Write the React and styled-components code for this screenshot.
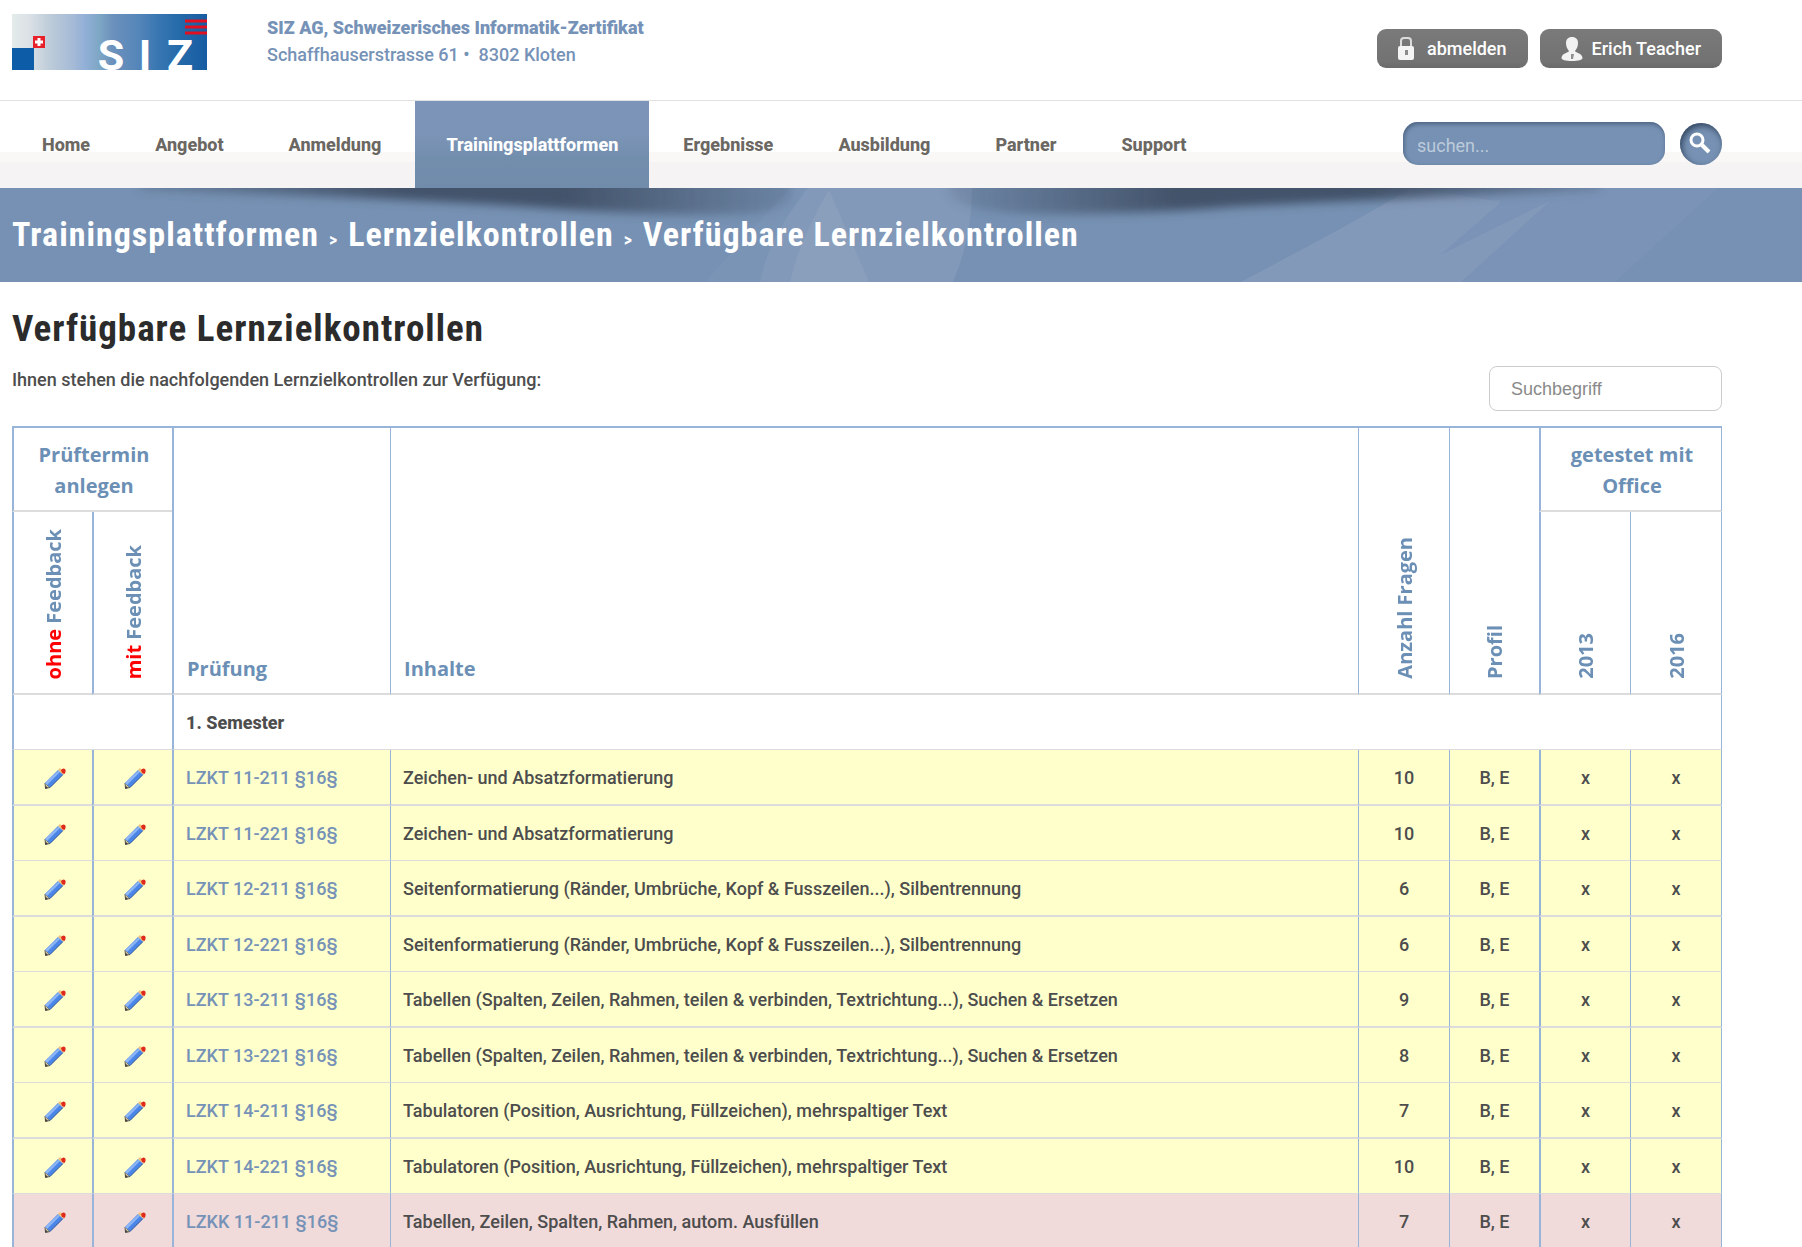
import { useState } from "react";
import styled, { createGlobalStyle } from "styled-components";

const navItems = [
  "Home",
  "Angebot",
  "Anmeldung",
  "Trainingsplattformen",
  "Ergebnisse",
  "Ausbildung",
  "Partner",
  "Support",
];

const exams = [
  { name: "LZKT 11-211 §16§", topic: "Zeichen- und Absatzformatierung", count: 10, type: "text" },
  { name: "LZKT 11-221 §16§", topic: "Zeichen- und Absatzformatierung", count: 10, type: "text" },
  { name: "LZKT 12-211 §16§", topic: "Seitenformatierung (Ränder, Umbrüche, Kopf & Fusszeilen...), Silbentrennung", count: 6, type: "text" },
  { name: "LZKT 12-221 §16§", topic: "Seitenformatierung (Ränder, Umbrüche, Kopf & Fusszeilen...), Silbentrennung", count: 6, type: "text" },
  { name: "LZKT 13-211 §16§", topic: "Tabellen (Spalten, Zeilen, Rahmen, teilen & verbinden, Textrichtung...), Suchen & Ersetzen", count: 9, type: "text" },
  { name: "LZKT 13-221 §16§", topic: "Tabellen (Spalten, Zeilen, Rahmen, teilen & verbinden, Textrichtung...), Suchen & Ersetzen", count: 8, type: "text" },
  { name: "LZKT 14-211 §16§", topic: "Tabulatoren (Position, Ausrichtung, Füllzeichen), mehrspaltiger Text", count: 7, type: "text" },
  { name: "LZKT 14-221 §16§", topic: "Tabulatoren (Position, Ausrichtung, Füllzeichen), mehrspaltiger Text", count: 10, type: "text" },
  { name: "LZKK 11-211 §16§", topic: "Tabellen, Zeilen, Spalten, Rahmen, autom. Ausfüllen", count: 7, type: "calc" },
];

function Logo() {
  return (
    <LogoImage width="195" height="56" viewBox="0 0 195 56" role="img" aria-label="SIZ">
      <defs>
        <linearGradient id="logoFade" x1="0" x2="1">
          <stop offset="0" stopColor="#e3ebeb" />
          <stop offset="0.08" stopColor="#dde2e6" />
          <stop offset="0.2" stopColor="#bccbd9" />
          <stop offset="0.32" stopColor="#a3b9d6" />
          <stop offset="0.37" stopColor="#93b0d8" />
          <stop offset="0.45" stopColor="#7da6c4" />
          <stop offset="0.52" stopColor="#6b90bc" />
          <stop offset="0.65" stopColor="#5586b9" />
          <stop offset="0.75" stopColor="#3876b2" />
          <stop offset="0.87" stopColor="#2369a9" />
          <stop offset="1" stopColor="#175ca2" />
        </linearGradient>
      </defs>
      <rect width="195" height="56" fill="url(#logoFade)" />
      <rect x="0" y="34" width="22" height="22" fill="#0d5ca8" />
      <rect x="21" y="22" width="12" height="12" fill="#e8202a" />
      <path d="M27 24v8M23 28h8" stroke="#fff" strokeWidth="3" />
      <path d="M173 7h22M173 13h22M173 19h22" stroke="#e01020" strokeWidth="3" />
      <text
        y="56"
        fill="#fff"
        fontFamily="Roboto, sans-serif"
        fontWeight="700"
        fontSize="43"
        textAnchor="middle"
      >
        <tspan x="99">S</tspan>
        <tspan x="133">I</tspan>
        <tspan x="168">Z</tspan>
      </text>
    </LogoImage>
  );
}

function LockIcon() {
  return (
    <svg width="16" height="24" viewBox="0 0 16 24" aria-hidden="true">
      <path d="M3 11V4q0-3 3-3h4q3 0 3 3v7" fill="none" stroke="#dcdcdc" strokeWidth="2" />
      <rect x="0" y="9" width="16" height="14" rx="2" fill="#f4f4f4" />
      <path d="M7 13h3v5H7z" fill="#8b8b8b" />
    </svg>
  );
}

function UserIcon() {
  return (
    <svg width="22" height="24" viewBox="0 0 22 24" aria-hidden="true">
      <path
        d="M11 0c4 0 6 2.500 6 6 0 4-1.500 6-3 8 1 2 7 2 7.500 7 0 2-4 3-10.500 3S.5 23 .5 21C1 16 7 16 8 14 6.500 12 5 10 5 6c0-3.500 2-6 6-6z"
        fill="#f2f2f2"
      />
      <path d="M10 17h3l-1 5h-2z" fill="#8f8f8f" />
    </svg>
  );
}

function MagnifierIcon() {
  return (
    <svg width="22" height="22" viewBox="0 0 22 22" aria-hidden="true">
      <circle cx="8" cy="8" r="6" fill="none" stroke="#fff" strokeWidth="3" />
      <path d="M13 13l7 7" stroke="#fff" strokeWidth="4" />
    </svg>
  );
}

function PencilIcon() {
  return (
    <svg width="22" height="22" viewBox="0 0 22 22" aria-hidden="true">
      <path d="M1 16L6 20.500L1.500 21.500Z" fill="#d8c9a0" stroke="#5d5a4c" />
      <path d="M14 3L19 7.500L6 20.500L1 16Z" fill="#4a86e8" />
      <path d="M14.500 3.500L16 5L3 18L1 16Z" fill="#8db5f5" />
      <path d="M19 7.500L6 20.500" stroke="#2a4f96" />
      <path d="M14 3L16 1L21 5.500L19 7.500Z" fill="#f0c27a" />
      <path d="M17 3Q19 0.500 21 2Q22.500 4 20.500 7L18 6Z" fill="#e02a1c" />
      <path d="M1 21.500L1.500 18.500L4 21Z" fill="#444" />
    </svg>
  );
}

function BannerArt() {
  return (
    <Artwork viewBox="0 0 1802 94" preserveAspectRatio="none" aria-hidden="true">
      <defs>
        <filter id="soft" x="-10%" y="-100%" width="120%" height="300%">
          <feGaussianBlur stdDeviation="5" />
        </filter>
        <linearGradient id="fadeLeft" x1="0" x2="1">
          <stop offset="0" stopColor="#43536a" stopOpacity="0.3" />
          <stop offset="0.4" stopColor="#43536a" />
          <stop offset="0.65" stopColor="#43536a" />
          <stop offset="1" stopColor="#43536a" stopOpacity="0.2" />
        </linearGradient>
        <linearGradient id="fadeRight" x1="0" x2="1">
          <stop offset="0" stopColor="#43536a" stopOpacity="0.15" />
          <stop offset="0.35" stopColor="#43536a" />
          <stop offset="0.65" stopColor="#43536a" />
          <stop offset="1" stopColor="#43536a" stopOpacity="0.3" />
        </linearGradient>
      </defs>
      <path d="M705 94L790 0H972Q972 50 953 94Z" fill="#7a94b6" />
      <path d="M760 94Q768 50 808 0H972Q972 50 953 94Z" fill="#8299b9" />
      <path d="M790 94Q800 50 829 2L869 94Z" fill="#8a9fbc" />
      <path d="M1461 94L1590 0H1718L1615 94Z" fill="#7a93b6" />
      <path d="M1350 94L1440 0H1600L1461 94Z" fill="#7a93b6" />
      <path d="M1241 94L1340 41L1412 0L1490 12Q1503 12 1500 15L1440 67L1550 13L1461 94Z" fill="#8399b9" />
      <path d="M140 -10H790Q806 24 740 26Q650 28 560 21Q400 10 140 2Z" fill="url(#fadeLeft)" filter="url(#soft)" />
      <path d="M950 -10H1600V2Q1400 10 1230 19Q1150 26 1050 26Q930 26 950 -10Z" fill="url(#fadeRight)" filter="url(#soft)" />
    </Artwork>
  );
}

function App() {
  const [search, setSearch] = useState("");
  const [term, setTerm] = useState("");
  const rows = exams.filter((exam) =>
    (exam.name + exam.topic).toLowerCase().includes(term.toLowerCase())
  );

  return (
    <>
      <GlobalStyle />
      <Header>
        <Logo />
        <Address>
          <Company>SIZ AG, Schweizerisches Informatik-Zertifikat</Company>
          <span>Schaffhauserstrasse 61 •&nbsp; 8302 Kloten</span>
        </Address>
        <UserButtons>
          <GreyButton type="button" $gap={13}>
            <LockIcon />
            abmelden
          </GreyButton>
          <GreyButton type="button" $gap={9}>
            <UserIcon />
            Erich Teacher
          </GreyButton>
        </UserButtons>
      </Header>

      <NavBar>
        <NavList>
          {navItems.map((item) => (
            <NavLink key={item} href="#" $active={item === "Trainingsplattformen"}>
              {item}
            </NavLink>
          ))}
        </NavList>
        <SearchForm onSubmit={(event) => event.preventDefault()}>
          <SearchInput
            aria-label="suchen"
            placeholder="suchen..."
            value={search}
            onChange={(event) => setSearch(event.target.value)}
          />
          <SearchButton type="submit" aria-label="suchen">
            <MagnifierIcon />
          </SearchButton>
        </SearchForm>
      </NavBar>

      <Banner>
        <BannerArt />
        <Breadcrumb>
          <a href="#">Trainingsplattformen</a>
          <Separator>&gt;</Separator>
          <a href="#">Lernzielkontrollen</a>
          <Separator>&gt;</Separator>
          <span>Verfügbare Lernzielkontrollen</span>
        </Breadcrumb>
      </Banner>

      <Main>
        <Title>Verfügbare Lernzielkontrollen</Title>
        <IntroRow>
          <Intro>Ihnen stehen die nachfolgenden Lernzielkontrollen zur Verfügung:</Intro>
          <TermInput
            aria-label="Suchbegriff"
            placeholder="Suchbegriff"
            value={term}
            onChange={(event) => setTerm(event.target.value)}
          />
        </IntroRow>

        <ExamTable>
          <colgroup>
            <Col $width={80} />
            <Col $width={80} />
            <Col $width={218} />
            <Col />
            <Col $width={91} />
            <Col $width={90} />
            <Col $width={91} />
            <Col $width={92} />
          </colgroup>
          <thead>
            <tr>
              <GroupHead colSpan={2} $thick>
                Prüftermin anlegen
              </GroupHead>
              <Head rowSpan={2} $thick $top>
                Prüfung
              </Head>
              <Head rowSpan={2} $top>
                Inhalte
              </Head>
              <Head rowSpan={2} $top $center>
                <Vertical>Anzahl Fragen</Vertical>
              </Head>
              <Head rowSpan={2} $top $center>
                <Vertical>Profil</Vertical>
              </Head>
              <GroupHead colSpan={2} $thick>
                getestet mit Office
              </GroupHead>
            </tr>
            <HeadRow>
              <Head $thick $center>
                <Vertical>
                  <Red>ohne</Red> Feedback
                </Vertical>
              </Head>
              <Head $thick $center>
                <Vertical>
                  <Red>mit</Red> Feedback
                </Vertical>
              </Head>
              <Head $thick $center>
                <Vertical>2013</Vertical>
              </Head>
              <Head $center>
                <Vertical>2016</Vertical>
              </Head>
            </HeadRow>
          </thead>
          <tbody>
            <SemesterRow>
              <Cell colSpan={2} $thick />
              <Cell colSpan={6} $thick>
                1. Semester
              </Cell>
            </SemesterRow>
            {rows.map((exam) => (
              <ExamRow key={exam.name} $type={exam.type}>
                <Cell $thick $center>
                  <EditLink href="#" aria-label={`${exam.name} ohne Feedback`}>
                    <PencilIcon />
                  </EditLink>
                </Cell>
                <Cell $thick $center>
                  <EditLink href="#" aria-label={`${exam.name} mit Feedback`}>
                    <PencilIcon />
                  </EditLink>
                </Cell>
                <Cell $thick>
                  <ExamLink href="#">{exam.name}</ExamLink>
                </Cell>
                <Cell>{exam.topic}</Cell>
                <Cell $center>{exam.count}</Cell>
                <Cell $center>B, E</Cell>
                <Cell $thick $center>
                  x
                </Cell>
                <Cell $center>x</Cell>
              </ExamRow>
            ))}
          </tbody>
        </ExamTable>
      </Main>
    </>
  );
}

const GlobalStyle = createGlobalStyle`
  * {
    box-sizing: border-box;
  }
  body {
    margin: 0;
    background-color: #fff;
    color: #4d4d4d;
    font-family: Roboto, sans-serif;
    font-size: 18px;
    font-weight: 500;
    line-height: 27px;
  }
  a {
    color: inherit;
    text-decoration: none;
  }
`;

const Header = styled.header`
  display: flex;
  align-items: flex-start;
  height: 101px;
  padding: 14px 80px 0 12px;
  border-bottom: 1px solid #e1e1e1;
`;

const LogoImage = styled.svg`
  flex-shrink: 0;
  overflow: visible;
`;

const Address = styled.div`
  display: flex;
  flex-direction: column;
  margin-left: 60px;
  color: #7692b7;
`;

const Company = styled.strong`
  font-weight: 900;
`;

const UserButtons = styled.div`
  display: flex;
  gap: 12px;
  margin: 15px 0 0 auto;
`;

const GreyButton = styled.button`
  display: flex;
  align-items: center;
  gap: ${({ $gap }) => $gap}px;
  height: 39px;
  padding: 0 21px;
  border: none;
  border-radius: 9px;
  background: linear-gradient(#7a7a7a, #727272 85%, #6a6a6a);
  color: #fff;
  font: inherit;
  cursor: pointer;
`;

const NavBar = styled.div`
  display: flex;
  justify-content: space-between;
  height: 87px;
  padding: 0 80px 0 11px;
  background: linear-gradient(#fff 51px, #f9f8f7 51px, #f9f8f7 61px, #f5f3f4 61px);
`;

const NavList = styled.nav`
  display: flex;
  gap: 3px;
`;

const NavLink = styled.a`
  display: flex;
  align-items: center;
  padding: 0 31px;
  color: #6b6762;
  font-weight: 800;
  ${({ $active }) =>
    $active &&
    `
    background: linear-gradient(#7b94b7 40%, #728ead 65%, #718bab);
    color: #fff;
  `};
`;

const SearchForm = styled.form`
  display: flex;
  align-items: flex-end;
  gap: 15px;
  padding-bottom: 23px;
`;

const SearchInput = styled.input`
  width: 262px;
  height: 43px;
  padding: 4px 14px 0;
  border: none;
  border-radius: 15px;
  background-color: #7691b3;
  box-shadow: inset 1px 2px 4px #4b6180;
  color: #fff;
  font: inherit;
  font-weight: 400;
  &::placeholder {
    color: #bccbdb;
  }
`;

const SearchButton = styled.button`
  display: flex;
  align-items: center;
  justify-content: center;
  width: 42px;
  height: 42px;
  padding: 0 2px 2px 0;
  border: none;
  border-radius: 50%;
  background-color: #7691b3;
  box-shadow: inset 2px 3px 6px #34465f;
  cursor: pointer;
`;

const Banner = styled.div`
  position: relative;
  height: 94px;
  padding: 26px 80px 0 12px;
  background-color: #7691b3;
  overflow: hidden;
`;

const Artwork = styled.svg`
  position: absolute;
  inset: 0;
  width: 100%;
  height: 100%;
`;

const Breadcrumb = styled.div`
  position: relative;
  display: flex;
  align-items: baseline;
  gap: 10px;
  color: #fff;
  font-family: "Roboto Condensed", Roboto, sans-serif;
  font-size: 34px;
  font-weight: 700;
  line-height: 40px;
  letter-spacing: 1px;
`;

const Separator = styled.span`
  font-size: 18px;
`;

const Main = styled.main`
  padding: 27px 80px 0 12px;
`;

const Title = styled.h1`
  margin: 0 0 17px;
  color: #2b2b2b;
  font-family: "Roboto Condensed", Roboto, sans-serif;
  font-size: 37px;
  font-weight: 700;
  line-height: 40px;
  letter-spacing: 1px;
`;

const IntroRow = styled.div`
  display: flex;
  justify-content: space-between;
  margin-bottom: 15px;
`;

const Intro = styled.p`
  margin: 0;
`;

const TermInput = styled.input`
  width: 233px;
  height: 45px;
  padding: 1px 21px 0;
  border: 1px solid #ccc;
  border-radius: 8px;
  color: #555;
  font-family: "Liberation Sans", sans-serif;
  font-size: 18px;
  &::placeholder {
    color: #8a8a8a;
  }
`;

const ExamTable = styled.table`
  width: 100%;
  table-layout: fixed;
  border-collapse: separate;
  border-spacing: 0;
`;

const Col = styled.col`
  ${({ $width }) => $width && `width: ${$width}px;`}
`;

const Cell = styled.td`
  padding: 0 12px;
  border: 0 solid #98b4d8;
  border-left-width: ${({ $thick }) => ($thick ? 2 : 1)}px;
  border-bottom: 1px solid #dcdcdc;
  text-align: ${({ $center }) => ($center ? "center" : "left")};
  &:last-child {
    border-right-width: 1px;
  }
`;

const Head = styled.th`
  padding: 0 13px 9px;
  border: 0 solid #98b4d8;
  border-left-width: ${({ $thick }) => ($thick ? 2 : 1)}px;
  border-top-width: ${({ $top }) => ($top ? 2 : 0)}px;
  border-bottom: 2px solid #dcdcdc;
  color: #6b8fb5;
  font-family: "Open Sans", sans-serif;
  font-size: 20px;
  font-weight: 700;
  line-height: 31px;
  text-align: ${({ $center }) => ($center ? "center" : "left")};
  vertical-align: bottom;
  &:last-child {
    border-right-width: 1px;
  }
`;

const GroupHead = styled(Head)`
  height: 86px;
  padding: 2px 16px 0 18px;
  border-top-width: 2px;
  text-align: center;
  vertical-align: middle;
`;

const HeadRow = styled.tr`
  height: 183px;
`;

const Vertical = styled.span`
  display: inline-block;
  margin-bottom: 5px;
  writing-mode: vertical-rl;
  transform: rotate(180deg);
  vertical-align: bottom;
`;

const Red = styled.span`
  color: #ff0000;
`;

const SemesterRow = styled.tr`
  height: 55px;
  font-weight: 800;
`;

const ExamRow = styled.tr`
  height: 55px;
  background-color: ${({ $type }) => ($type === "calc" ? "#f0dada" : "#ffffcc")};
  &:nth-child(even) {
    height: 56px;
  }
  &:nth-child(even) td {
    border-bottom-width: 2px;
  }
`;

const EditLink = styled.a`
  display: flex;
  justify-content: center;
  padding: 2px 0 0 3px;
`;

const ExamLink = styled.a`
  color: #7692b7;
`;

export default App;
